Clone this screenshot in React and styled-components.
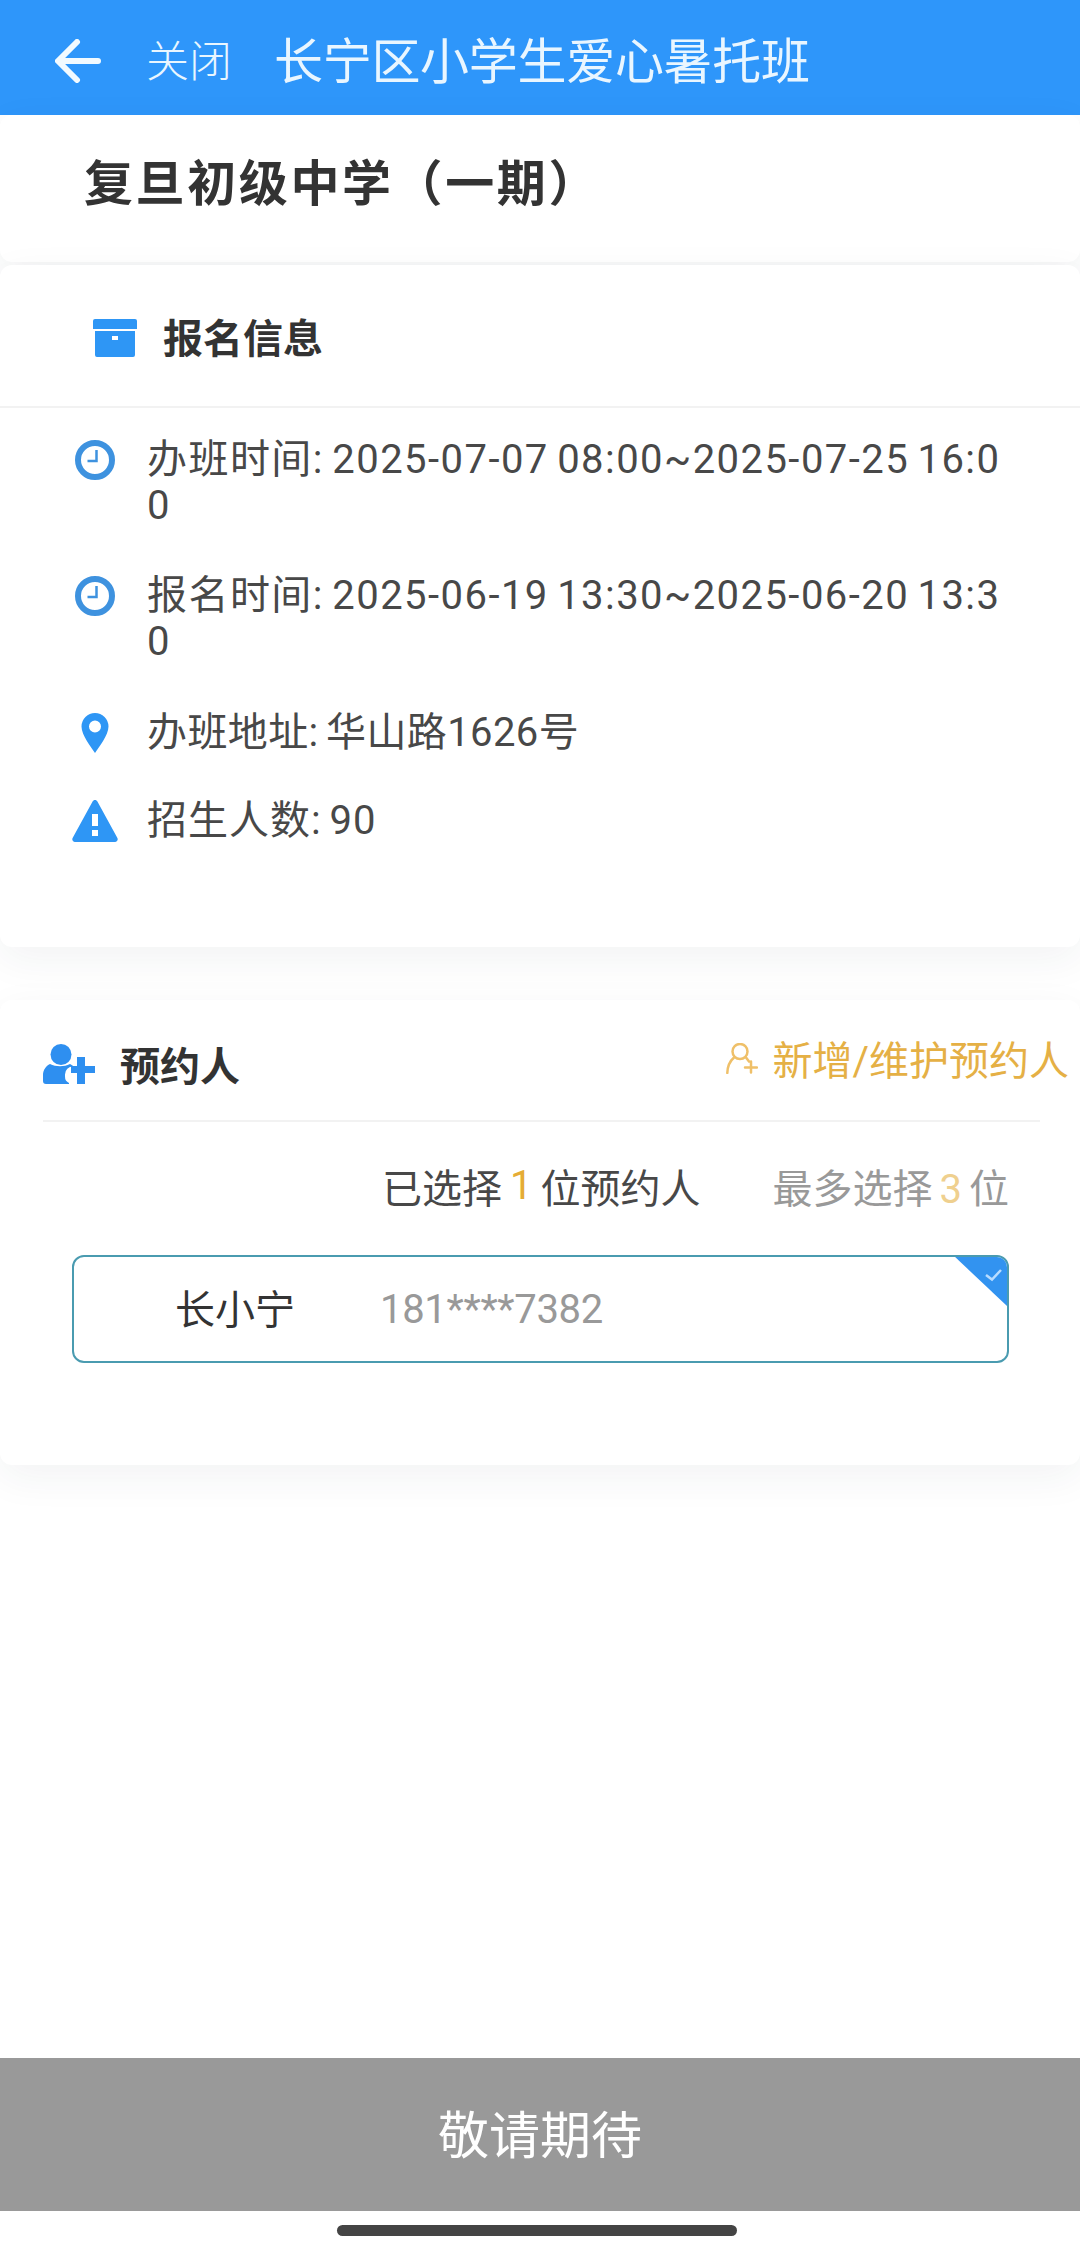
import React from 'react';
import styled, { createGlobalStyle } from 'styled-components';

const GlobalStyle = createGlobalStyle`
  html, body {
    margin: 0;
    padding: 0;
    background: #fff;
    font-family: Roboto, "Noto Sans CJK SC", sans-serif;
  }
  * { box-sizing: border-box; }
`;

const Page = styled.div`
  width: 1080px;
  height: 2255px;
  display: flex;
  flex-direction: column;
  overflow: hidden;
  background: #fff;
`;

const Header = styled.header`
  height: 115px;
  flex: none;
  display: flex;
  align-items: center;
  padding-left: 55px;
  background: #2e96fa;
  color: #e9f6ff;
`;

const BackButton = styled.span`
  display: flex;
  margin-top: 6px;
`;

const CloseText = styled.span`
  margin-left: 45px;
  font-size: 43px;
  font-weight: 300;
`;

const Title = styled.h1`
  margin: 0 0 0 42px;
  font-size: 49px;
  font-weight: 400;
  letter-spacing: -0.3px;
  white-space: nowrap;
`;

const Card = styled.section`
  flex: none;
  height: ${({ $height }) => $height}px;
  margin-bottom: ${({ $gap }) => $gap || 0}px;
  background: #fff;
  border-radius: 12px;
  box-shadow: 0 12px 40px rgba(40, 50, 70, 0.06);
`;

const SchoolName = styled.h2`
  margin: 0;
  padding: 40px 0 0 84px;
  font-size: 49px;
  line-height: 60px;
  font-weight: 700;
  letter-spacing: 2.600px;
  color: #333;
  white-space: nowrap;
`;

const SectionHead = styled.div`
  height: 143px;
  display: flex;
  align-items: center;
  padding: 4px 0 0 93px;
  border-bottom: 2px solid #f2f2f2;
`;

const SectionTitle = styled.h3`
  margin: -4px 0 0 26px;
  font-size: 40px;
  font-weight: 700;
  color: #333;
  white-space: nowrap;
`;

const InfoList = styled.div`
  display: flex;
  flex-direction: column;
  padding-top: 29px;
`;

const InfoRow = styled.div`
  display: flex;
  align-items: flex-start;
  margin-bottom: ${({ $gap }) => $gap}px;
`;

const InfoIconSlot = styled.div`
  flex: none;
  width: 147px;
  height: 46px;
  padding: 0 15px 0 57px;
  display: flex;
  align-items: center;
  justify-content: center;
`;

const InfoText = styled.div`
  width: 862px;
  font-size: 40px;
  line-height: 46px;
  letter-spacing: ${({ $spacing }) => $spacing}px;
  word-spacing: -3px;
  color: #484848;
  word-break: break-all;
`;

const PersonHead = styled.div`
  height: 122px;
  margin: 0 40px 0 43px;
  padding-top: 8px;
  display: flex;
  align-items: center;
  justify-content: space-between;
  border-bottom: 2px solid #f2f2f2;
`;

const HeadSide = styled.div`
  display: flex;
  align-items: center;
`;

const PersonTitle = styled.h3`
  margin: 0 0 0 25px;
  font-size: 40px;
  font-weight: 700;
  color: #333;
`;

const AddLink = styled.a`
  display: flex;
  align-items: center;
  gap: 14px;
  margin: -12px -29px 0 0;
  font-size: 40px;
  color: #e5b045;
  white-space: nowrap;
`;

const CountLine = styled.div`
  height: 133px;
  padding: 0 71px 6px 0;
  display: flex;
  align-items: center;
  justify-content: flex-end;
  font-size: 40px;
  color: #484848;
  white-space: nowrap;
`;

const Limit = styled.span`
  margin-left: 72px;
  color: #999;
`;

const Count = styled.b`
  font-weight: 400;
  margin: 0 ${({ $soft }) => ($soft ? 7 : 8)}px;
  color: ${({ $soft }) => ($soft ? '#efd08f' : '#e5ac35')};
`;

const PersonBox = styled.div`
  position: relative;
  width: 937px;
  height: 108px;
  margin-left: 72px;
  display: flex;
  align-items: center;
  overflow: hidden;
  border: 2px solid #4a9bb0;
  border-radius: 12px;
`;

const PersonName = styled.span`
  width: 306px;
  padding: 0 0 4px 101px;
  font-size: 40px;
  color: #333;
`;

const Phone = styled.span`
  font-size: 40px;
  letter-spacing: -0.3px;
  color: #999;
`;

const CornerMark = styled.svg`
  position: absolute;
  top: -2px;
  right: -2px;
`;

const Spacer = styled.div`
  flex: 1;
`;

const Footer = styled.button`
  flex: none;
  height: 153px;
  border: 0;
  padding: 0 0 5px;
  background: #999;
  color: #fff;
  font-family: inherit;
  font-size: 51px;
`;

const HomeZone = styled.div`
  flex: none;
  height: 44px;
  display: flex;
  justify-content: center;
  padding: 14px 6px 0 0;
`;

const HomeBar = styled.div`
  width: 400px;
  height: 11px;
  border-radius: 6px;
  background: #444;
`;

const BLUE = '#2e96f5';

const BackArrow = () => (
  <svg width="46" height="44" viewBox="0 0 46 44" fill="none" stroke="#f2faff" strokeWidth="6" strokeLinecap="round" strokeLinejoin="round">
    <path d="M43 22H4M22 3 3 22l19 19" />
  </svg>
);

const ArchiveIcon = () => (
  <svg width="44" height="38" viewBox="0 0 44 38" fill={BLUE}>
    <path d="M0 2a2 2 0 0 1 2-2h40a2 2 0 0 1 2 2v8H0z" />
    <path d="M2 12h40v24a2 2 0 0 1-2 2H4a2 2 0 0 1-2-2zm17 5v4h6v-4z" fillRule="evenodd" />
  </svg>
);

const ClockIcon = () => (
  <svg width="40" height="40" viewBox="0 0 40 40" fill="none" stroke="#3e92df">
    <circle cx="20" cy="20" r="17" strokeWidth="6" />
    <path d="M21.500 10v11h-9" strokeWidth="2.500" />
  </svg>
);

const PinIcon = () => (
  <svg width="28" height="40" viewBox="0 0 28 40">
    <path fill={BLUE} fillRule="evenodd" d="M14 0a13.500 13.500 0 0 1 13.500 13.500C27.500 22 18 34 14 40 10 34 .5 22 .5 13.500A13.500 13.500 0 0 1 14 0zm0 7.500a6 6 0 1 0 0 12 6 6 0 0 0 0-12z" />
  </svg>
);

const AlertIcon = () => (
  <svg width="46" height="42" viewBox="0 0 46 42">
    <path fill={BLUE} fillRule="evenodd" d="M23 0c1 0 1.800.5 2.400 1.500l20 36.500c.9 1.800-.2 4-2.400 4H3c-2.200 0-3.300-2.200-2.400-4l20-36.500C21.200.5 22 0 23 0zm-3 14v12h6V14zm0 16v6h6v-6z" />
  </svg>
);

const PersonPlusIcon = () => (
  <svg width="52" height="40" viewBox="0 0 52 40" fill="#2e8ff0">
    <circle cx="18" cy="10.500" r="10.500" />
    <path d="M7 20c6 3 14 3 20 0 1.500.7 2.800 1.500 3.800 2.500H30a8 8 0 0 0-8 8v2a7 7 0 0 0 4 6.500V40H3a3 3 0 0 1-3-3v-6c0-5 3-9 7-11z" />
    <path d="M34 13h8v9h10v7H42v11h-8V29h-6v-7h6z" />
  </svg>
);

const OutlinePersonIcon = () => (
  <svg width="32" height="31" viewBox="0 0 32 31" fill="none" stroke="#efc069" strokeWidth="2.500" strokeLinecap="round">
    <circle cx="14" cy="8.500" r="7.500" />
    <path d="M8 14.500C4 18 1.500 23 1.300 30M20 14.500l3 4M19 24.500h12M25 18.500v11" />
  </svg>
);

const SelectedCorner = () => (
  <CornerMark width="56" height="56" viewBox="0 0 56 56">
    <path fill="#3293f0" d="M0 0h56v53z" />
    <path fill="none" stroke="#b8dcff" strokeWidth="2.500" d="M33 20l6 4.500 9-9.500" />
  </CornerMark>
);

const infoRows = [
  { icon: <ClockIcon />, text: '办班时间: 2025-07-07 08:00~2025-07-25 16:00', spacing: 1.45, gap: 44 },
  { icon: <ClockIcon />, text: '报名时间: 2025-06-19 13:30~2025-06-20 13:30', spacing: 1.45, gap: 45 },
  { icon: <PinIcon />, text: '办班地址: 华山路1626号', spacing: 0.4, gap: 42 },
  { icon: <AlertIcon />, text: '招生人数: 90', spacing: 1, gap: 0 },
];

const App = () => (
  <Page>
    <GlobalStyle />
    <Header>
      <BackButton>
        <BackArrow />
      </BackButton>
      <CloseText>关闭</CloseText>
      <Title>长宁区小学生爱心暑托班</Title>
    </Header>

    <Card $height={147} $gap={3}>
      <SchoolName>复旦初级中学（一期）</SchoolName>
    </Card>

    <Card $height={682} $gap={53}>
      <SectionHead>
        <ArchiveIcon />
        <SectionTitle>报名信息</SectionTitle>
      </SectionHead>
      <InfoList>
        {infoRows.map((row) => (
          <InfoRow key={row.text} $gap={row.gap}>
            <InfoIconSlot>{row.icon}</InfoIconSlot>
            <InfoText $spacing={row.spacing}>{row.text}</InfoText>
          </InfoRow>
        ))}
      </InfoList>
    </Card>

    <Card $height={465}>
      <PersonHead>
        <HeadSide>
          <PersonPlusIcon />
          <PersonTitle>预约人</PersonTitle>
        </HeadSide>
        <AddLink>
          <OutlinePersonIcon />
          新增/维护预约人
        </AddLink>
      </PersonHead>
      <CountLine>
        已选择<Count>1</Count>位预约人
        <Limit>最多选择<Count $soft>3</Count>位</Limit>
      </CountLine>
      <PersonBox>
        <PersonName>长小宁</PersonName>
        <Phone>181****7382</Phone>
        <SelectedCorner />
      </PersonBox>
    </Card>

    <Spacer />
    <Footer>敬请期待</Footer>
    <HomeZone>
      <HomeBar />
    </HomeZone>
  </Page>
);

export default App;
